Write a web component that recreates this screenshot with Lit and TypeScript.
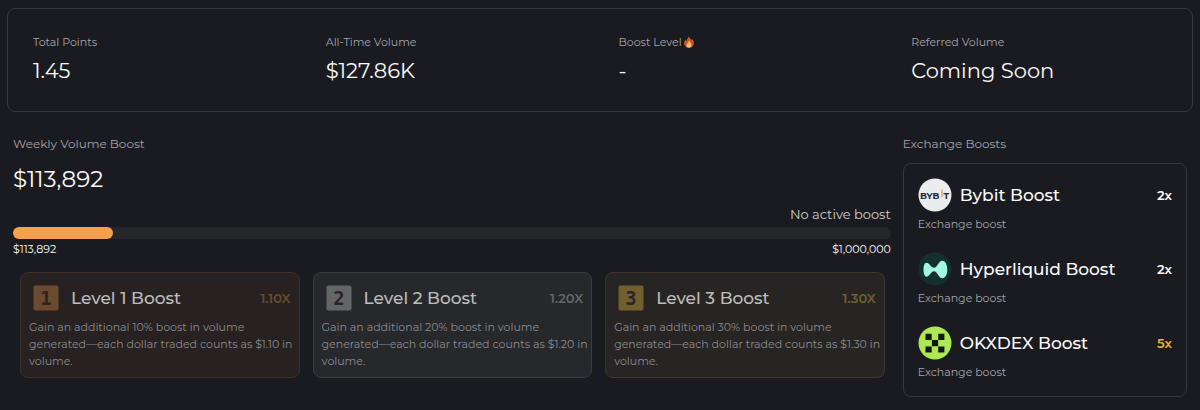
import { LitElement, html, css, svg } from "lit";
import { customElement, property } from "lit/decorators.js";

const stats = [
  { label: "Total Points", value: "1.45" },
  { label: "All-Time Volume", value: "$127.86K" },
  { label: "Boost Level", value: "-", flame: true },
  { label: "Referred Volume", value: "Coming Soon" },
];

const levels = [
  { level: 1, tone: "bronze", rate: "1.10X", percent: "10%", worth: "$1.10" },
  { level: 2, tone: "silver", rate: "1.20X", percent: "20%", worth: "$1.20" },
  { level: 3, tone: "gold", rate: "1.30X", percent: "30%", worth: "$1.30" },
];

const flameIcon = html`<svg class="flame" viewBox="0 0 12 12" aria-hidden="true">
  <path fill="#c9582f" d="M5.6.3c.5 1.5 2.2 2.500 2.800 4.100.4-.4.5-1 .4-1.600 1.600 1.300 2.300 3 2 5-.4 2.500-2.300 4-4.800 4S1.500 10.300 1.200 7.900c-.2-1.700.5-3 1.300-4.100.1.700.4 1.200.9 1.500C3.400 3.300 5.300 2.400 5.600.3z"/>
  <path fill="#f6c065" d="M6.200 4.400c.2 1.600 2.200 2.300 2.200 4.600 0 1.700-1 2.700-2.400 2.700S3.600 10.700 3.600 9.200c0-1 .4-1.600.9-2.200.1.500.3.800.7.900-.1-1.500.2-2.600 1-3.500z"/>
</svg>`;

const logos: Record<string, unknown> = {
  bybit: svg`
    <circle cx="17" cy="17" r="16.500" fill="#ececee"/>
    <g fill="#24263c" font-size="9" font-weight="700">
      <text x="2" y="20.500">BYB</text>
      <text x="25.500" y="20.500">T</text>
    </g>
    <path d="M24 11.500v7.500" stroke="#f3ad3d" stroke-width="1.500"/>`,
  hyperliquid: svg`
    <circle cx="17" cy="17" r="16.500" fill="#14302d"/>
    <path fill="#a5f7e0" d="M5.500 17.500c0-4 1-6.800 3-6.800 3 0 4.500 5 7.500 5 3.200 0 4.800-7 8.200-7 3.300 0 5.100 4 5.100 8.800s-1.800 8.800-5.100 8.800c-3.400 0-5-7-8.200-7-3 0-4.500 5.400-7.500 5.400-2 0-3-3.200-3-7.200z"/>`,
  okxdex: svg`
    <circle cx="17" cy="17" r="16.500" fill="#aee854"/>
    <path fill="#111a12" d="M7.500 7.800h6.200v6.200H7.500zM20.200 7.800h6.200v6.200h-6.200zM13.900 14.100h6.200v6.200h-6.200zM7.500 20.400h6.200v6.200H7.500zM20.200 20.400h6.200v6.200h-6.200z"/>`,
};

const exchanges = [
  { name: "Bybit Boost", logo: "bybit", rate: "2x", top: false },
  { name: "Hyperliquid Boost", logo: "hyperliquid", rate: "2x", top: false },
  { name: "OKXDEX Boost", logo: "okxdex", rate: "5x", top: true },
];

@customElement("level-card")
class LevelCard extends LitElement {
  @property({ attribute: false }) data!: (typeof levels)[number];

  static styles = css`
    :host { display: block; }
    .card {
      box-sizing: border-box;
      height: 100%;
      padding: 12px 0 7px 8px;
      border: 1px solid;
      border-radius: 8px;
    }
    .bronze { background: #272221; border-color: #3d2f27; --tone: #6b4a2d; }
    .silver { background: #27282c; border-color: #3b3c40; --tone: #646569; }
    .gold { background: #272523; border-color: #3f372b; --tone: #71602e; }
    .head { display: flex; align-items: center; padding: 0 8px 0 4px; }
    .digit { width: 26px; height: 26px; margin-right: 12px; flex: none; }
    .plate { fill: var(--tone); }
    .mark { fill: #2a2625; font: 700 19px "DejaVu Sans Mono", monospace; text-anchor: middle; }
    .title { margin: 0; flex: 1; font-size: 17px; line-height: 24px; font-weight: 500; color: #bdbdbd; white-space: nowrap; }
    .rate { font-size: 13px; font-weight: 600; color: var(--tone); }
    .text { margin: 8px 0 0; font-size: 11px; line-height: 17px; color: #8b8a8d; }
  `;

  render() {
    const d = this.data;
    const text = `Gain an additional ${d.percent} boost in volume generated—each dollar traded counts as ${d.worth} in volume.`;
    return html`<article class="card ${d.tone}">
      <div class="head">
        <svg class="digit" viewBox="0 0 26 26" aria-hidden="true">
          <rect class="plate" x="0.500" y="0.500" width="25" height="25" rx="2"></rect>
          <text class="mark" x="13" y="20">${d.level}</text>
        </svg>
        <h3 class="title">${`Level ${d.level} Boost`}</h3>
        <span class="rate">${d.rate}</span>
      </div>
      <p class="text">${text}</p>
    </article>`;
  }
}

@customElement("app-root")
class AppRoot extends LitElement {
  static styles = css`
    :host {
      display: block;
      box-sizing: border-box;
      min-height: 100vh;
      padding: 8px 7px 13px;
      background: #1a1b20;
      color: #fafafa;
      font-family: Montserrat, Inter, sans-serif;
    }
    .stats {
      display: grid;
      grid-template-columns: repeat(4, 1fr);
      column-gap: 36px;
      margin: 0;
      padding: 24px 24px 24px 25px;
      border: 1px solid #37383c;
      border-radius: 8px;
    }
    .label { display: flex; align-items: center; gap: 1px; font-size: 11px; line-height: 18px; color: #a5a5a9; }
    .value { margin: 4px 0 0; font-size: 21px; line-height: 32px; }
    .flame { width: 12px; height: 12px; }
    .main {
      display: grid;
      grid-template-columns: minmax(0, 877fr) minmax(0, 284fr);
      gap: 12px;
      padding: 22px 6px 0 6px;
    }
    .heading { margin: 0; font-size: 12px; line-height: 20px; font-weight: 400; color: #a5a5a9; }
    .amount { margin-top: 8px; font-size: 23px; line-height: 34px; }
    .status { margin-top: 8px; text-align: right; font-size: 13px; line-height: 20px; color: #d0d0d2; }
    .track { height: 12px; margin-top: 3px; border-radius: 6px; background: #26272b; }
    .fill { height: 100%; border-radius: 6px; background: #f5a04c; }
    .scale { display: flex; justify-content: space-between; margin-top: 2px; font-size: 11px; line-height: 16px; }
    .levels { display: grid; grid-template-columns: repeat(3, minmax(0, 1fr)); gap: 13px; padding: 15px 6px 0 7px; }
    .panel { margin: 9px 0 0; padding: 14px 14px 15px; list-style: none; border: 1px solid #37383c; border-radius: 8px; display: grid; gap: 19px; }
    .row { display: flex; align-items: center; gap: 8px; }
    .logo { width: 34px; height: 34px; flex: none; }
    .name { margin: 0; flex: 1; font-size: 17px; line-height: 24px; font-weight: 500; white-space: nowrap; }
    .rate { font-size: 13px; font-weight: 600; }
    .top { color: #f0b13f; }
    .note { margin: 3px 0 0; font-size: 11px; line-height: 18px; color: #a5a5a9; }
  `;

  render() {
    const current = 113892;
    const goal = 1000000;
    const money = (n: number) => `$${n.toLocaleString("en-US")}`;
    return html`
      <dl class="stats">
        ${stats.map(
          (s) => html`<div>
            <dt class="label">${s.label}${s.flame ? flameIcon : null}</dt>
            <dd class="value">${s.value}</dd>
          </div>`
        )}
      </dl>
      <main class="main">
        <section>
          <h2 class="heading">Weekly Volume Boost</h2>
          <div class="amount">${money(current)}</div>
          <div class="status">No active boost</div>
          <div class="track" role="progressbar" aria-label="Weekly volume" aria-valuemin="0" aria-valuemax=${goal} aria-valuenow=${current}>
            <div class="fill" style="width:${(current / goal) * 100}%"></div>
          </div>
          <div class="scale">
            <span>${money(current)}</span>
            <span>${money(goal)}</span>
          </div>
          <div class="levels">${levels.map((l) => html`<level-card .data=${l}></level-card>`)}</div>
        </section>
        <section>
          <h2 class="heading">Exchange Boosts</h2>
          <ul class="panel">
            ${exchanges.map(
              (e) => html`<li>
                <div class="row">
                  <svg class="logo" viewBox="0 0 34 34" aria-hidden="true">${logos[e.logo]}</svg>
                  <h3 class="name">${e.name}</h3>
                  <span class="rate ${e.top ? "top" : ""}">${e.rate}</span>
                </div>
                <p class="note">Exchange boost</p>
              </li>`
            )}
          </ul>
        </section>
      </main>
    `;
  }
}
